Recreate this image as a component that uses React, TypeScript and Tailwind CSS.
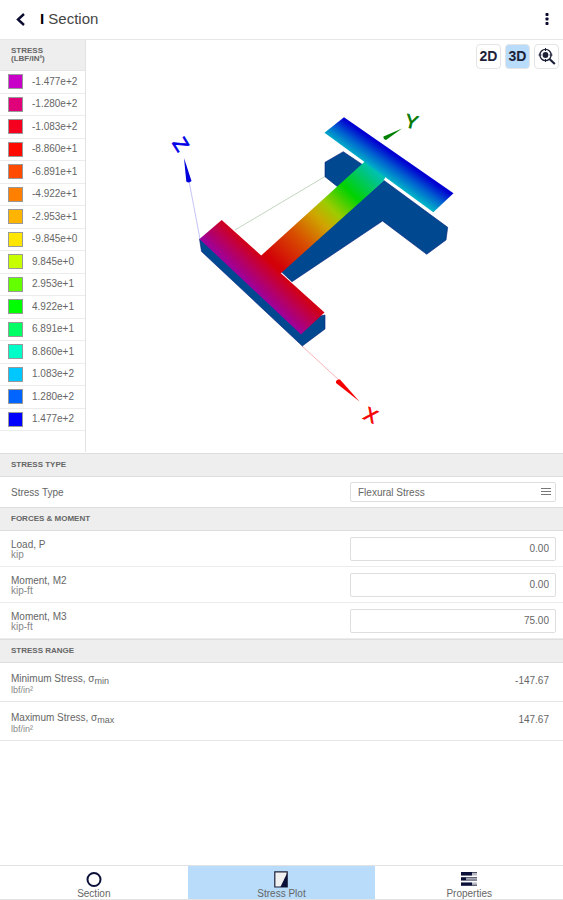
import React, { useState } from 'react';

interface LegendItem {
  color: string;
  value: string;
}

interface Force {
  id: string;
  label: string;
  unit: string;
  value: string;
}

const legend: LegendItem[] = [
  { color: '#c800c8', value: '-1.477e+2' },
  { color: '#e0007a', value: '-1.280e+2' },
  { color: '#f5001e', value: '-1.083e+2' },
  { color: '#ff0a00', value: '-8.860e+1' },
  { color: '#ff4b00', value: '-6.891e+1' },
  { color: '#ff8000', value: '-4.922e+1' },
  { color: '#ffb400', value: '-2.953e+1' },
  { color: '#ffe600', value: '-9.845e+0' },
  { color: '#c8ff00', value: '9.845e+0' },
  { color: '#64ff00', value: '2.953e+1' },
  { color: '#00ff00', value: '4.922e+1' },
  { color: '#00ff64', value: '6.891e+1' },
  { color: '#00ffc8', value: '8.860e+1' },
  { color: '#00c8ff', value: '1.083e+2' },
  { color: '#0064ff', value: '1.280e+2' },
  { color: '#0000ff', value: '1.477e+2' },
];

const forces: Force[] = [
  { id: 'load-p', label: 'Load, P', unit: 'kip', value: '0.00' },
  { id: 'moment-m2', label: 'Moment, M2', unit: 'kip-ft', value: '0.00' },
  { id: 'moment-m3', label: 'Moment, M3', unit: 'kip-ft', value: '75.00' },
];

const ranges = [
  { label: 'Minimum Stress, σ', sub: 'min', value: '-147.67' },
  { label: 'Maximum Stress, σ', sub: 'max', value: '147.67' },
];

function SectionHeader({ title }: { title: string }) {
  return (
    <h2 className="flex h-6 items-center border-y border-[#dedede] bg-[#eeeeee] px-[11px] text-[8px] font-bold text-[#666]">
      {title}
    </h2>
  );
}

function StressModel() {
  return (
    <svg viewBox="86 40 477 412" className="block h-[412px] w-full" role="img" aria-label="3D stress plot">
      <defs>
        <linearGradient id="front" gradientUnits="userSpaceOnUse" x1="250" y1="287" x2="271" y2="265">
          <stop offset="0" stopColor="#9c00a0" />
          <stop offset="0.5" stopColor="#b8005c" />
          <stop offset="1" stopColor="#d20014" />
        </linearGradient>
        <linearGradient id="web" gradientUnits="userSpaceOnUse" x1="273" y1="261" x2="368" y2="164">
          <stop offset="0" stopColor="#d20008" />
          <stop offset="0.26" stopColor="#d85000" />
          <stop offset="0.46" stopColor="#cfa600" />
          <stop offset="0.58" stopColor="#9ccc00" />
          <stop offset="0.76" stopColor="#00d200" />
          <stop offset="1" stopColor="#00c0b0" />
        </linearGradient>
        <linearGradient id="back" gradientUnits="userSpaceOnUse" x1="379" y1="172.5" x2="392.5" y2="153.2">
          <stop offset="0" stopColor="#00b0c8" />
          <stop offset="0.5" stopColor="#0060d0" />
          <stop offset="1" stopColor="#0000d0" />
        </linearGradient>
      </defs>

      {/* axis lines */}
      <path d="M200 239 189 181" stroke="#c4c4f8" strokeWidth="1" />
      <path d="M235 230 325 176.5" stroke="#c3d6c0" strokeWidth="1" />
      <path d="M302 346 340 381" stroke="#fbb4bc" strokeWidth="1" />

      {/* body */}
      <g fill="#004890" stroke="#08207c" strokeWidth="0.6">
        <path d="M343.3 151.7 325 162.3 325 176.7 338.5 187.5 364.5 166Z" />
        <path d="M384 180.5 447.7 227.3 446 240 426.7 254.3 382.5 221 292 281.7 281 271.5Z" />
        <path d="M199.5 239 201.5 251.5 302.3 346 325 329 325 315 301 320Z" />
      </g>

      {/* stressed face */}
      <path d="M259 257.5 364.8 161.5 380 165 385.5 177 383 181.5 281.7 272.5 276 276Z" fill="url(#web)" />
      <path d="M221.7 220 199.5 239 301 334.5 324.5 312.5Z" fill="url(#front)" />
      <path d="M344 117.3 324.5 132.7 433.3 212.3 453.5 193.3Z" fill="url(#back)" />

      {/* axis arrows */}
      <path d="M184 158 186.3 181.5Q189 183.5 191.5 181Z" fill="#0000dc" />
      <path d="M402 128.5 383.5 136.5Q383 139 386 140Z" fill="#008000" />
      <path d="M359.5 401.5 336 383Q335.5 379 340 379.5Z" fill="#f50000" />
      <g fontFamily="Liberation Sans" textAnchor="middle" strokeWidth="0.7">
        <text transform="translate(175 148) rotate(58)" fontSize="20" fill="#0000e6" stroke="#0000e6">Z</text>
        <text transform="translate(410 128) rotate(14)" fontSize="19" fill="#007800" stroke="#007800">Y</text>
        <text transform="translate(368 421) rotate(26)" fontSize="19" fill="#f50000" stroke="#f50000">X</text>
      </g>
    </svg>
  );
}

export default function App() {
  const [view, setView] = useState('3D');
  const [values, setValues] = useState(forces.map((force) => force.value));

  const viewButton = 'flex size-[25px] items-center justify-center rounded-[4px] border border-[#e4e4e4] text-[14px] font-bold text-[#1c2138]';

  return (
    <div className="flex min-h-screen flex-col bg-white font-['Liberation_Sans',sans-serif] text-[10px] text-[#666]">
      <header className="flex h-10 items-center border-b border-[#e6e6e6] px-3">
        <button aria-label="Back" className="flex size-4 items-center justify-center">
          <svg viewBox="0 0 16 16" className="size-4" fill="none" stroke="#0b0b30" strokeWidth="2.4">
            <path d="M12 2 6 7.5l6 5.5" />
          </svg>
        </button>
        <h1 className="ml-3 flex-1 text-[15px] text-[#444]">
          <span className="font-bold text-black">I</span> Section
        </h1>
        <button aria-label="More" className="flex h-4 w-2 items-center justify-center">
          <svg viewBox="0 0 8 16" className="h-4 w-2" fill="#0b0b30">
            <rect x="2.5" y="1" width="3" height="3" rx="0.7" />
            <rect x="2.5" y="5.5" width="3" height="3" rx="0.7" />
            <rect x="2.5" y="10" width="3" height="3" rx="0.7" />
          </svg>
        </button>
      </header>

      <main className="flex-1">
        <div className="flex pb-px">
          <aside className="w-[86px] shrink-0 border-r border-[#e2e2e2]">
            <h2 className="h-[31px] border-b border-[#e6e6e6] bg-[#eeeeee] px-[11px] pt-[7px] text-[8px] leading-[8px] font-bold text-[#666]">
              STRESS
              <br />
              (LBF/IN²)
            </h2>
            <ul className="grid h-[360px] auto-rows-fr">
              {legend.map((item) => (
                <li key={item.value} className="flex items-center border-b border-[#ececec] pl-2">
                  <span className="size-[15px] border border-[#999]" style={{ backgroundColor: item.color }} />
                  <span className="ml-[9px] leading-none">{item.value}</span>
                </li>
              ))}
            </ul>
          </aside>

          <div className="relative min-w-0 flex-1">
            <StressModel />
            <div className="absolute top-[4px] right-[4px] flex gap-1">
              <button onClick={() => setView('2D')} className={`${viewButton} ${view === '2D' ? 'bg-[#b8dcfa]' : 'bg-white'}`}>
                2D
              </button>
              <button onClick={() => setView('3D')} className={`${viewButton} ${view === '3D' ? 'bg-[#b8dcfa]' : 'bg-white'}`}>
                3D
              </button>
              <button aria-label="Zoom" className={`${viewButton} bg-white`}>
                <svg viewBox="0 0 18 18" className="size-[18px] shrink-0" fill="none" stroke="#1c2138">
                  <circle cx="7.5" cy="7" r="5.6" strokeWidth="1.4" />
                  <circle cx="7.5" cy="7" r="2.9" fill="#1c2138" stroke="none" />
                  <path d="M7.5 0v3M7.5 11v3M.5 7h3M11.500 7h3" strokeWidth="1" />
                  <path d="M11.5 11 16.8 16" strokeWidth="2.2" />
                </svg>
              </button>
            </div>
          </div>
        </div>

        <SectionHeader title="STRESS TYPE" />
        <div className="flex h-[30px] items-center pr-[7px] pl-[11px]">
          <label htmlFor="stress-type" className="flex-1">Stress Type</label>
          <div className="relative w-[206px]">
            <select id="stress-type" className="block h-5 w-full appearance-none rounded-[2px] border border-[#dedede] bg-white px-[7px]">
              <option>Flexural Stress</option>
            </select>
            <svg viewBox="0 0 10 8" className="pointer-events-none absolute top-[6px] right-[5px] h-2 w-[10px]" stroke="#777" strokeWidth="1">
              <path d="M0 .5h10M0 3.5h10M0 6.5h10" />
            </svg>
          </div>
        </div>

        <SectionHeader title="FORCES & MOMENT" />
        {forces.map((force, index) => (
          <div key={force.id} className="flex h-9 items-center border-b border-[#ececec] pr-[7px] pl-[11px]">
            <label htmlFor={force.id} className="flex-1 pt-[3px] leading-[10px]">
              {force.label}
              <span className="block text-[#888]">{force.unit}</span>
            </label>
            <input
              id={force.id}
              value={values[index]}
              onChange={(e) => setValues(values.map((v, i) => (i === index ? e.target.value : v)))}
              className="h-6 w-[206px] rounded-[2px] border border-[#dedede] px-[6px] text-right"
            />
          </div>
        ))}

        <SectionHeader title="STRESS RANGE" />
        {ranges.map((range) => (
          <div key={range.sub} className="flex h-[39px] items-center border-b border-[#e6e6e6] pr-[14px] pl-[11px]">
            <div className="flex-1 pt-[3px] leading-[12px]">
              {range.label}
              <sub className="text-[9px]">{range.sub}</sub>
              <span className="block text-[9px] leading-[10px] text-[#888]">lbf/in²</span>
            </div>
            <span className="pb-1">{range.value}</span>
          </div>
        ))}
      </main>

      <nav className="grid h-[35px] grid-cols-3 border-y border-[#e2e2e2] leading-[10px]">
        <button className="flex flex-col items-center justify-end">
          <svg viewBox="0 0 18 18" className="size-[18px]" fill="none" stroke="#0b1038" strokeWidth="2">
            <circle cx="9" cy="8.500" r="6.5" />
          </svg>
          Section
        </button>
        <button className="flex flex-col items-center justify-end bg-[#b8dcfa]">
          <svg viewBox="0 0 18 18" className="size-[18px]">
            <path d="M2.8 .8h12.4v15.2H2.8z" fill="#f0f0f0" stroke="#1c2138" strokeWidth="1.2" />
            <path d="M15.2 2v14H8.4z" fill="#0b1038" />
          </svg>
          Stress Plot
        </button>
        <button className="flex flex-col items-center justify-end">
          <svg viewBox="0 0 18 18" className="size-[18px]">
            <path d="M1 1h16v3.400H1zM1 6.200h16v3.400H1zM1 11.400h16v3.400H1z" fill="#b8bac4" />
            <path d="M1 1h11v3.400H1zM1 6.200h5v3.400H1zM1 11.400h11v3.400H1z" fill="#0b1038" />
            <path d="M12 1.500h5M6 6.700h11M12 14.300h5M6 9.100h11" stroke="#4a4d60" strokeWidth="1" />
          </svg>
          Properties
        </button>
      </nav>
    </div>
  );
}
